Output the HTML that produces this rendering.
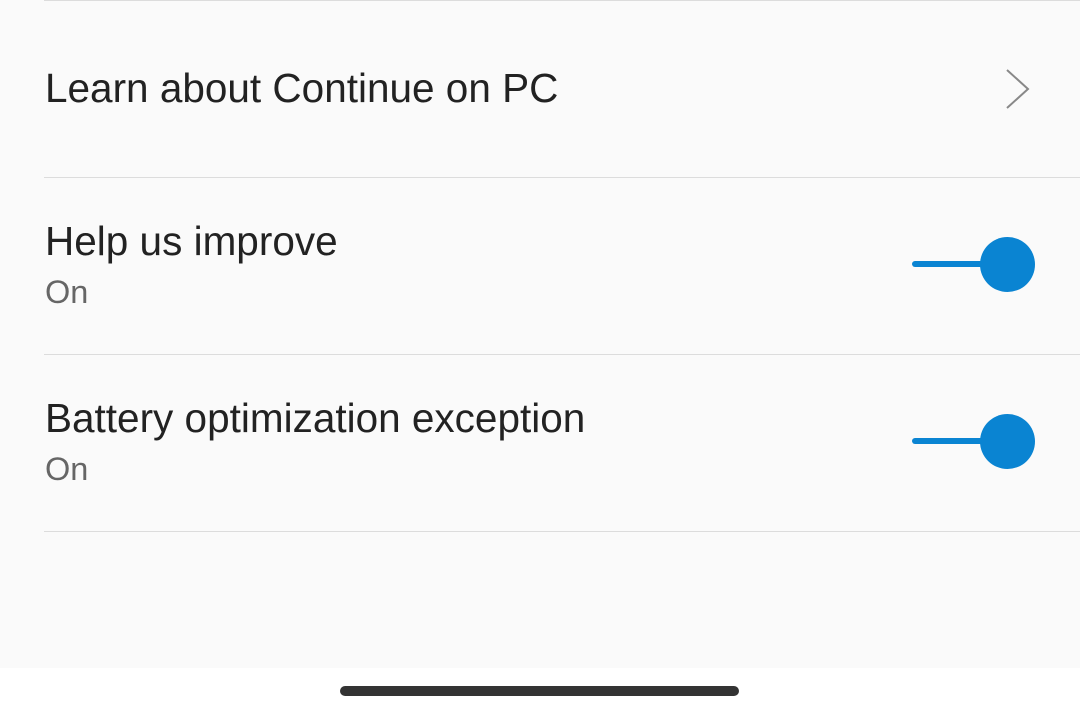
<!DOCTYPE html>
<html><head><style>
body{margin:0;width:1080px;height:713px;background:#fafafa;font-family:"Liberation Sans",sans-serif;position:relative;overflow:hidden}
.t{position:absolute;left:45px;color:#222;font-size:40.5px;white-space:nowrap}
.s{position:absolute;left:45px;color:#666;font-size:32.5px}
.hr{position:absolute;left:44px;right:0;height:1px;background:#dcdcdc}
.tr{position:absolute;left:912px;width:80px;height:6px;border-radius:3px;background:#0a84d2}
.kn{position:absolute;left:980px;width:55px;height:55px;border-radius:50%;background:#0a84d2}
</style></head><body>
<div class="hr" style="top:0"></div>
<div class="t" style="top:65px">Learn about Continue on PC</div>
<svg style="position:absolute;left:1000px;top:66px" width="34" height="46"><path d="M7 4 L28 23 L7 42" fill="none" stroke="#888" stroke-width="2"/></svg>
<div class="hr" style="top:177px"></div>
<div class="t" style="top:218px">Help us improve</div>
<div class="s" style="top:274px">On</div>
<div class="tr" style="top:261px"></div><div class="kn" style="top:237px"></div>
<div class="hr" style="top:354px"></div>
<div class="t" style="top:395px">Battery optimization exception</div>
<div class="s" style="top:451px">On</div>
<div class="tr" style="top:438px"></div><div class="kn" style="top:414px"></div>
<div class="hr" style="top:531px"></div>
<div style="position:absolute;left:0;top:668px;width:1080px;height:45px;background:#fff"></div>
<div style="position:absolute;left:340px;top:686px;width:399px;height:10px;border-radius:5px;background:#333"></div>
</body></html>
